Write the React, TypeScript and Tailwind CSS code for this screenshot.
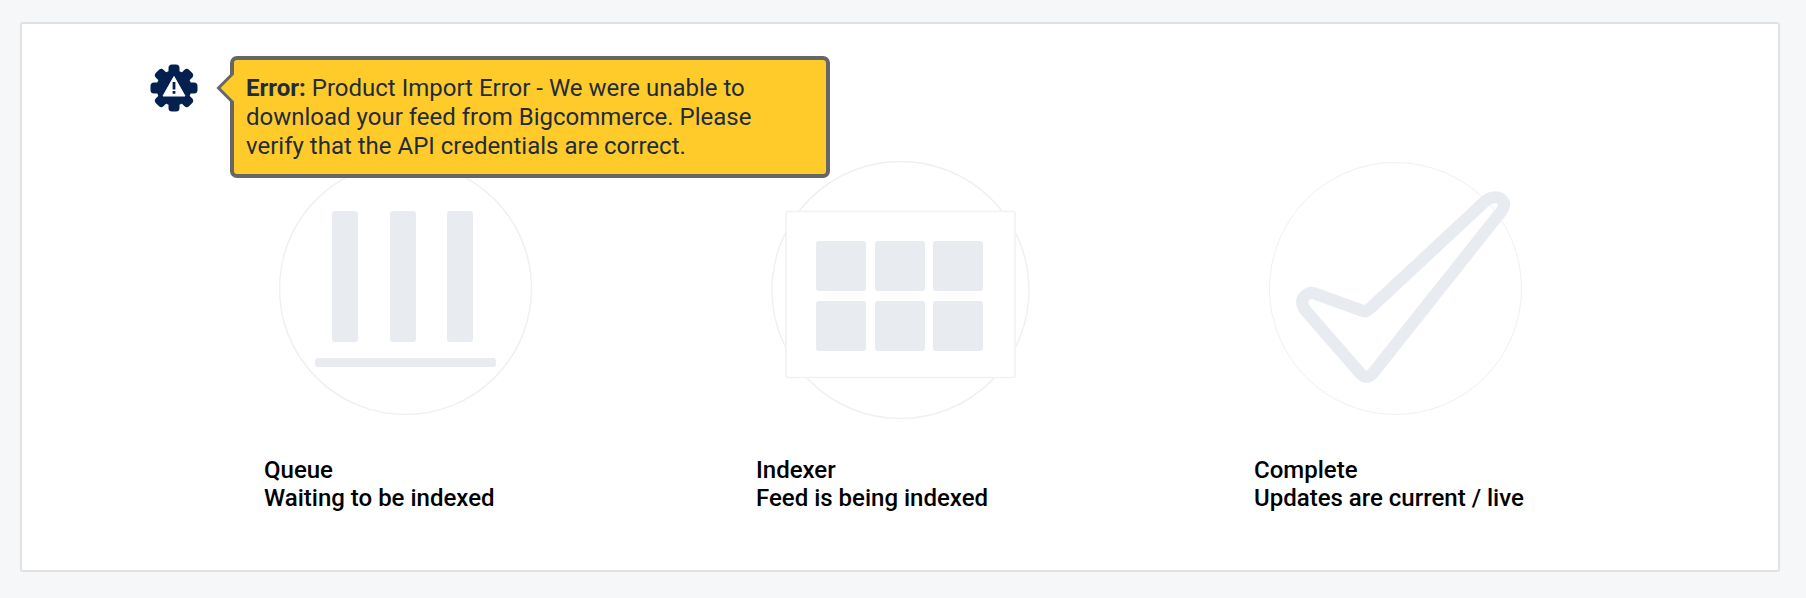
const steps = [
  { title: "Queue", text: "Waiting to be indexed", width: "w-[492px]" },
  { title: "Indexer", text: "Feed is being indexed", width: "w-[498px]" },
  { title: "Complete", text: "Updates are current / live", width: "w-[400px]" },
]

function QueueArt() {
  return (
    <svg width="258" height="258" viewBox="0 0 258 258" className="block">
      <circle cx="126.5" cy="127.5" r="126" fill="#fff" stroke="#eff0f3" strokeWidth="1.5" />
      <rect x="53" y="50" width="26" height="131" rx="3" fill="#e8ebf0" />
      <rect x="111" y="50" width="26" height="131" rx="3" fill="#e8ebf0" />
      <rect x="168" y="50" width="26" height="131" rx="3" fill="#e8ebf0" />
      <rect x="36" y="197" width="181" height="9" rx="3" fill="#e8ebf0" />
    </svg>
  )
}

function IndexerArt() {
  const tiles = [45, 104, 162]
  return (
    <svg width="260" height="260" viewBox="0 0 260 260" className="block">
      <circle cx="129.5" cy="129" r="128.5" fill="#fff" stroke="#eff0f3" strokeWidth="1.5" />
      <rect x="15" y="50.5" width="229" height="166" rx="2" fill="#fff" stroke="#f0f1f4" strokeWidth="1.5" />
      {tiles.map((x) => (
        <rect key={x} x={x} y="80" width="50" height="50" rx="3" fill="#e8ebf0" />
      ))}
      {tiles.map((x) => (
        <rect key={x} x={x} y="140" width="50" height="50" rx="3" fill="#e8ebf0" />
      ))}
    </svg>
  )
}

function CompleteArt() {
  return (
    <svg width="258" height="258" viewBox="0 0 258 258" className="block">
      <circle cx="126.5" cy="127.5" r="126" fill="#fff" stroke="#eff0f3" strokeWidth="1" />
      <path
        d="M216 40.4 C 221 35.5 229 35 233 39 C 237 43 235 47 231 52 L 104 212 C 100 217 95 217 91 212 L 37 150 C 32 144 32 138 36 135 C 39 132 43 131 47 133 L 94 150 C 96 151 98 150 100 148.4 Z"
        fill="none"
        stroke="#e8ebf0"
        strokeWidth="12"
        strokeLinejoin="round"
      />
    </svg>
  )
}

function GearAlert() {
  const angles = [0, 45, 90, 135, 180, 225, 270, 315]
  return (
    <svg width="48" height="48" viewBox="0 0 48 48" className="block">
      {angles.map((a) => (
        <rect key={a} x="18.5" y="0.5" width="11" height="12" rx="3.5" fill="#04204f" transform={`rotate(${a} 24 24)`} />
      ))}
      <circle cx="24" cy="24" r="17.5" fill="#04204f" />
      <path d="M24 12.5 L35 32 L13 32 Z" fill="#fff" stroke="#fff" strokeWidth="1" strokeLinejoin="round" />
      <rect x="22.6" y="18" width="2.8" height="7.5" fill="#04204f" />
      <rect x="22.6" y="27" width="2.8" height="2.8" fill="#04204f" />
    </svg>
  )
}

export default function App() {
  return (
    <div className="h-[598px] bg-[#f6f7f9] pt-[22px] pl-[20px] pr-[26px] font-['Roboto',sans-serif]">
      <div className="relative h-[550px] rounded-[3px] border-2 border-[#e0e1e3] bg-white pt-[137px] pl-[242px]">
        <div className="flex">
          {steps.map((step, i) => (
            <div key={step.title} className={step.width}>
              <div className="ml-[15px] h-[258px]">
                {i === 0 && <QueueArt />}
                {i === 1 && <IndexerArt />}
                {i === 2 && <CompleteArt />}
              </div>
              <div className="mt-[37px] text-[24px] leading-[28px] font-medium text-black">
                <div>{step.title}</div>
                <div>{step.text}</div>
              </div>
            </div>
          ))}
        </div>

        <div className="absolute left-[128px] top-[40px]">
          <GearAlert />
        </div>
        <div className="absolute left-[208px] top-[32px] w-[600px] rounded-[7px] border-4 border-[#666666] bg-[#ffcb2b] pt-[14px] pr-[60px] pb-[13px] pl-[12px] text-[24px] leading-[29px] text-[#232b3a]">
          <span className="absolute -left-[18px] top-[12px] h-[32px] w-[18px]">
            <svg width="18" height="32" viewBox="0 0 18 32" className="block">
              <path d="M18 0 L2 16 L18 32 Z" fill="#ffcb2b" />
              <path d="M18 0.5 L2.5 16 L18 31.5" fill="none" stroke="#666666" strokeWidth="3" />
            </svg>
          </span>
          <b className="font-bold">Error:</b> Product Import Error - We were unable to download your feed from Bigcommerce. Please verify that the API credentials are correct.
        </div>
      </div>
    </div>
  )
}
